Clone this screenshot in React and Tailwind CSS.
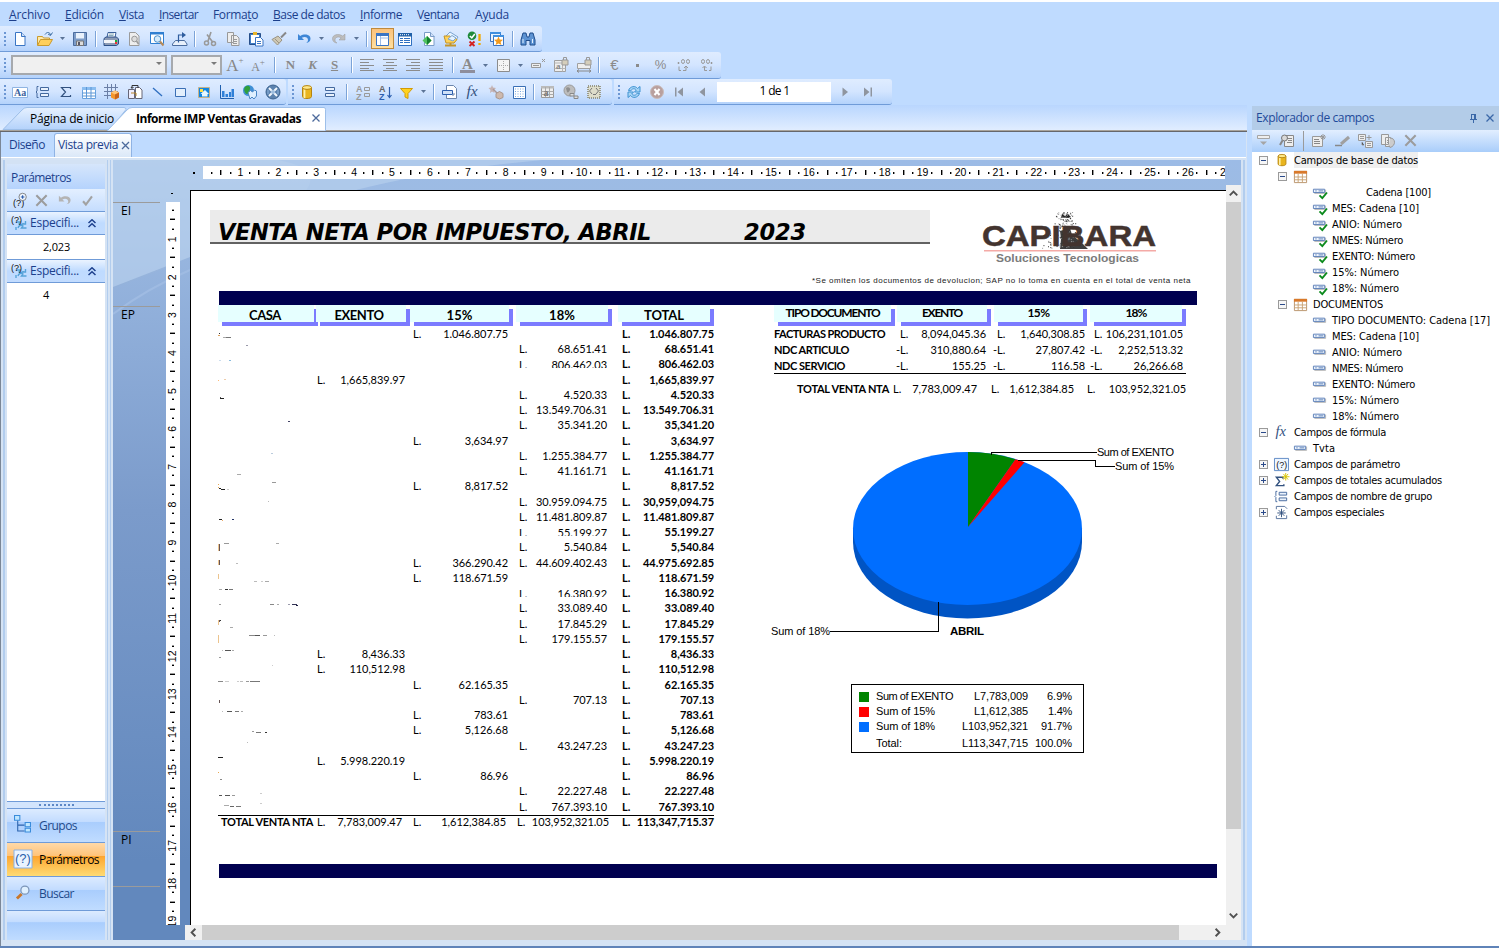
import React, { useLayoutEffect, useRef } from 'react';

const UI = "font-['Open_Sans',sans-serif]";

/* Text whose letter spacing is tuned so that it takes exactly w pixels. */
function T({ w, className = '', children }) {
  const ref = useRef(null);
  useLayoutEffect(() => {
    const el = ref.current;
    el.style.letterSpacing = '0px';
    const natural = el.getBoundingClientRect().width;
    el.style.letterSpacing = (w - natural) / el.textContent.length + 'px';
  }, [w]);
  return <span ref={ref} className={'inline-block whitespace-pre ' + className}>{children}</span>;
}

const B = '#3a75c4';
const G = '#9b9b9b';
const lines = (c, rows) => rows.map(([x, y, w], i) => <rect key={i} x={x} y={y} width={w} height="1" fill={c} />);

const ICONS = {
  doc: <><path d="M3.500 1.500h6l3.500 3.500v9.500h-9.500z" fill="#fff" stroke={B} /><path d="M9.500 1.500v4h4" fill="#cfe0f7" stroke={B} /></>,
  open: <><path d="M.5 14V5.500h5l1 1.500h6v2" fill="#ffe9a8" stroke="#c99a2e" /><path d="M.5 14.500l3-6h12l-3.500 6z" fill="#ffcf5b" stroke="#c99a2e" /><path d="M8 3.500c2-3 5-2.500 5.500.5M15.500 1.500l-2 3-2.500-1.500" fill="none" stroke="#3b6ea5" /></>,
  save: <><path d="M1.500 1.500h13v13h-13z" fill="#7d9cc8" stroke="#4b6c9e" /><path d="M4 2h8v5.500H4z" fill="#e9f1fb" /><path d="M4.500 10h7v4.500h-7z" fill="#dcdcdc" stroke="#777" /><path d="M6 11h2v3H6z" fill="#556" /></>,
  print: <><path d="M5 1.500h8l-1 5H4z" fill="#fff" stroke="#3a5f9a" /><path d="M1 7.500l2-1.500h10.500l2 2V13l-2 1.500H1z" fill="#8c9bb5" stroke="#2b4f87" /><path d="M1 9h11v3H1z" fill="#f2f4f8" /><path d="M12 9h2v2h-2z" fill="#18b13a" /><path d="M12 11h2v2h-2z" fill="#e33" /><path d="M6 3h5M5.500 4.500h5" stroke="#8ab" /></>,
  docview: <><path d="M3.500 1.500h6l3.500 3.500v9.500h-9.500z" fill="#eee" stroke={G} /><circle cx="8.500" cy="8" r="2.800" fill="#ddd" stroke="#999" /><path d="M10.500 10l2 3" stroke="#999" strokeWidth="1.500" /></>,
  preview: <><path d="M1.500 1.500h13v11h-13z" fill="#fff" stroke="#2f7fd1" /><path d="M1 1h14v2.500H1z" fill="#2f7fd1" /><circle cx="8.500" cy="8" r="3.300" fill="#d5ebfb" stroke="#4b90cc" /><path d="M11 10.500l3.500 4" stroke="#b58a5a" strokeWidth="2" /></>,
  export: <><path d="M3.500 9.500h9l2.500 3.500v1.500H.500V13z" fill="#e8f0fb" stroke="#4b6c9e" /><path d="M6.500 11.500V4h5" fill="none" stroke="#2f5d9e" strokeWidth="1.200" /><path d="M10 1l4 3-4 3z" fill="#2f5d9e" /></>,
  cut: <><path d="M9 1L6 10M5 3.500l6 8" stroke="#999" strokeWidth="1.600" /><circle cx="4.500" cy="12" r="2" fill="none" stroke="#999" strokeWidth="1.500" /><circle cx="11.500" cy="12.500" r="2" fill="none" stroke="#999" strokeWidth="1.500" /></>,
  copy: <><path d="M2.500 1.500h6v10h-6zM6.500 4.500h5l2.500 2.500v7.500H6.500z" fill="#eee" stroke="#999" /><path d="M8 8.500h4M8 10.500h4M8 12.500h4" stroke="#999" /></>,
  paste: <><path d="M1.500 2.500h11v11h-11z" fill="#3f7cc4" stroke="#274f8a" /><path d="M3 4h8v8H3z" fill="#fff" /><path d="M5 1h4v3H5z" fill="#e7b52a" /><path d="M7.500 6.500h5l2.500 2.500v6H7.500z" fill="#fff" stroke={B} /><path d="M9 10.500h4M9 12.500h4" stroke={B} /></>,
  brush: <><path d="M15 1.500l-5 5" stroke="#888" strokeWidth="2" /><path d="M7 5l4 4-4.500 5L1 8.500z" fill="#cfc8b4" stroke="#9a9484" /><path d="M4 8l4 4" stroke="#9a9484" /></>,
  undo: <path d="M2 3v6h6L5.800 6.800C9 5 12 6.500 12 9c0 1.500-.8 2.300-2 3 3-.2 4.500-2 4.500-4.500C14.500 4 9 2 4.200 5z" fill="#3d86d6" />,
  redo: <path d="M14 3v6H8l2.200-2.200C7 5 4 6.500 4 9c0 1.500.8 2.300 2 3-3-.2-4.500-2-4.500-4.500C1.500 4 7 2 11.800 5z" fill="#bdbdbd" stroke="#999" strokeWidth=".5" />,
  layout: <><path d="M2.500 2.500h12v12h-12z" fill="#fff" stroke={B} /><path d="M2 2h13v3H2z" fill={B} /><path d="M6.500 5v9M6.500 7h8" stroke="#9dbce6" /></>,
  grid2: <><path d="M1.500 2.500h13v12h-13z" fill="#fff" stroke="#2f6fc0" /><path d="M1 2h14v3.500H1z" fill="#2060a8" /><path d="M3 3.700h10" stroke="#fff" strokeDasharray="1 1" />{lines('#2f6fc0', [[3, 7, 3], [7, 7, 6], [3, 9, 3], [7, 9, 6], [3, 11, 3], [7, 11, 6]])}</>,
  docadd: <><path d="M4.500 1.500h6l3.500 3.500v9.500h-9.500z" fill="#fff" stroke="#7a9cc8" /><path d="M10.500 1.500v4h4" fill="#cfe0f7" stroke="#7a9cc8" /><path d="M7 5l4.500 4.500L7 14 2.500 9.500z" fill="#4fc25f" /><path d="M7 5l4.500 4.500L7 14z" fill="#14802f" /></>,
  dbenv: <><path d="M1 7l6-6 8 5-4 6z" fill="#e6f3ff" stroke="#7aa3cf" /><path d="M1 5h6l1 1.500h3l3 2-3 3.500H3z" fill="#ffd257" stroke="#c4952a" /><path d="M5 8l4-3.500 4 2.500-3 3z" fill="#e6f3ff" stroke="#7aa3cf" /><path d="M2 14.500h11M7.500 12v3" stroke="#c4952a" strokeWidth="2" /></>,
  check: <><circle cx="6" cy="4.800" r="4.300" fill="#1f8a3a" /><path d="M3.800 5l2 1.800L8.800 3" stroke="#fff" strokeWidth="1.500" fill="none" /><path d="M3.500 10.500l5 4.500M8.500 10.500l-5 4.500" stroke="#d3201f" strokeWidth="1.900" /><path d="M13.500 3v7M13.500 12v2" stroke="#f0a800" strokeWidth="2.300" /></>,
  star: <><path d="M1.500 1.500h10v9h-10z" fill="#e9f3ff" stroke={B} /><path d="M4.500 4.500h10v10h-10z" fill="#fff" stroke={B} /><path d="M1 1h11v2H1zM4 4h11v2H4z" fill="#3f8fe0" /><path d="M9.500 5.500l1.300 3 3.200.3-2.400 2.100.8 3.100-2.900-1.600L6.600 14l.8-3.100L5 8.800l3.200-.3z" fill="#f39a1d" /></>,
  find: <><path d="M3 2h3l1 4h2l1-4h3l2 7v5h-5V9.500H6V14H1V9z" fill="#5d93d3" stroke="#1f4c8b" /><path d="M3 8v4M12.500 8v4" stroke="#e3f0ff" /></>,
  al: <path d="M1 2.500h14M1 5.500h9M1 8.500h14M1 11.500h9M1 13.500h14" stroke="#8c8c8c" />,
  ac: <path d="M1 2.500h14M4 5.500h8M1 8.500h14M4 11.500h8M1 13.500h14" stroke="#8c8c8c" />,
  ar: <path d="M1 2.500h14M6 5.500h9M1 8.500h14M6 11.500h9M1 13.500h14" stroke="#8c8c8c" />,
  aj: <path d="M1 2.500h14M1 5.500h14M1 8.500h14M1 11.500h14M1 13.500h14" stroke="#8c8c8c" />,
  border: <><path d="M2.500 2.500h12v12h-12z" fill="#f4f4f4" stroke="#8c8c8c" /><path d="M8.500 4v9M4 8.500h9" stroke="#aaa" strokeDasharray="1 1" /></>,
  suppress: <><path d="M1.500 6.500h9v4h-9z" fill="#eee" stroke="#999" /><path d="M3 8.500h6" stroke="#999" /><path d="M12 2l3 3M15 2l-3 3" stroke="#999" /></>,
  lockgrid: <><path d="M1.500 3.500h11v11h-11z" fill="#eee" stroke="#a0a0a0" /><path d="M1.500 6h11M1.500 11.500h11M9.500 3.500v11" stroke="#b5b5b5" /><text x="3" y="12" fontSize="9" fontWeight="bold" fill="#888" fontFamily="Liberation Serif">a</text><path d="M9 3h6v5H9z" fill="#d5cebb" stroke="#999" /><path d="M10.500 3V.500h3V3" fill="none" stroke="#999" /></>,
  locksize: <><path d="M1.500 6.500h13v5h-13z" fill="#eee" stroke="#a0a0a0" /><path d="M9 3h6v5H9z" fill="#d5cebb" stroke="#999" /><path d="M10.500 3V.500h3V3" fill="none" stroke="#999" /><path d="M1 14h14M3 12.500L1 14l2 1.500M13 12.500l2 1.500-2 1.500" fill="none" stroke="#888" /></>,
  decAdd: <><path d="M5.500 4.500a1.500 2 0 1 0 3 0a1.500 2 0 1 0-3 0M10.500 4.500a1.500 2 0 1 0 3 0a1.500 2 0 1 0-3 0" fill="none" stroke="#999" /><path d="M2 5.500h1v1H2zM3 9.500v4h2M7 13.500h3v-4M8 11l2-2 2 2" fill="none" stroke="#999" /></>,
  decDel: <><path d="M2.500 4.500a1.500 2 0 1 0 3 0a1.500 2 0 1 0-3 0M7.500 4.500a1.500 2 0 1 0 3 0a1.500 2 0 1 0-3 0" fill="none" stroke="#999" /><path d="M12 5.500h1v1h-1zM12 9.500v4h-2M8 13.500H5.500v-4M3.500 11l2-2 2 2" fill="none" stroke="#999" /></>,
  textobj: <><path d="M.5 3.500h15v10H.5z" fill="#fff" stroke="#8fb4e2" /><text x="2" y="12" fontSize="10" fontWeight="bold" fill="#3c64a0" fontFamily="Liberation Serif">Aa</text></>,
  group: <><path d="M3.500 2.500H2v4.500L1 8l1 1v4.500h1.500" fill="none" stroke="#44699e" /><path d="M5.500 3.500h8v3h-8zM5.500 9.500h8v3h-8z" fill="#eaf2fc" stroke="#44699e" /></>,
  sum: <path d="M12.500 5V3.500h-9L7.500 8l-4 4.500h9V11" fill="none" stroke="#33527f" strokeWidth="1.200" />,
  crosstab: <><path d="M1.500 3.500h13v11h-13z" fill="#fff" stroke="#6aa3de" /><path d="M1 3h14v3H1z" fill="#8abdf0" /><path d="M1.500 9h13M1.500 12h13M5.500 3v11M10 3v11" stroke="#5c97d6" /></>,
  cube: <><path d="M0 3.500h14M0 7.500h14M0 11.500h8M3.500 0v15M7.500 0v10M11.500 0v7" stroke="#6b7fa6" /><path d="M7 8.500l4-2 4 2v5l-4 2-4-2z" fill="#f5962a" /><path d="M7 8.500l4 2 4-2-4-2z" fill="#ffc57a" /><path d="M11 10.500l4-2v5l-4 2z" fill="#c9661a" /></>,
  subrep: <><path d="M1.500 5.500h6v9h-6z" fill="#eef" stroke="#667" /><path d="M8.500 3.500h4l2.500 2.500v8.500H8.500z" fill="#fff" stroke="#667" /><path d="M5 4V1.500h6V4M4 3l1 1.500L6.500 3" fill="none" stroke="#333" /><path d="M4 9h5v3" fill="none" stroke="#b8862c" /></>,
  line: <path d="M3 4l9 8" stroke="#2f6fc0" strokeWidth="1.300" />,
  box: <path d="M2.500 4.500h10v8h-10z" fill="#e3effc" stroke="#3a6fb5" />,
  picture: <><path d="M2.500 3.500h11v10h-11z" fill="#1286e0" stroke="#c4b28a" /><path d="M6 12.500V10H4.500L9 6l4 4h-1.500v2.500z" fill="#e6f8ff" /><path d="M4 5h3v3H4z" fill="#ffe14a" /></>,
  chart: <><path d="M1.500 1v13.500H15" fill="none" stroke="#1f5fae" /><path d="M3 7h2.500v6H3zM6.500 10H9v3H6.500zM10 8h2v5h-2zM12.500 5H15v8h-2.500z" fill="#2f80d8" /></>,
  map: <><circle cx="6.500" cy="6.500" r="5.500" fill="#3f8fd6" /><path d="M3 3c3-3 6 0 5 2s-1 5-3 5-4-5-2-7z" fill="#2fa03c" /><path d="M6 8.500l2.500-2 2 1.500 2-2 2 1v5l-2.500 3-2-2-2 2z" fill="#dff0ff" stroke="#4a86c4" /></>,
  flash: <><circle cx="8" cy="8" r="7" fill="#5b82ae" stroke="#3c638f" /><path d="M4 4l8 8M12 4l-8 8" stroke="#f2f7fc" strokeWidth="2" /><circle cx="8" cy="8" r="2" fill="#9fbfe0" /><path d="M3 6v4M13 6v4" stroke="#8db2dc" /></>,
  db: <><path d="M3.500 3.500v9c0 2.700 9 2.700 9 0v-9" fill="#e9b51e" stroke="#b58410" /><path d="M5.500 5v9" stroke="#fff1a8" strokeWidth="1.800" /><ellipse cx="8" cy="3.500" rx="4.500" ry="1.900" fill="#ffe98a" stroke="#b58410" /></>,
  section: <path d="M3.500 3.500h9v3h-9zM3.500 9.500h9v3h-9z" fill="#eaf2fc" stroke="#44699e" />,
  sortg: <><text x="1" y="7.500" fontSize="9" fontWeight="bold" fill="#999" fontFamily="Liberation Sans">A</text><text x="1" y="15.500" fontSize="9" fontWeight="bold" fill="#999" fontFamily="Liberation Sans">Z</text><path d="M9.500 3.500h5v3h-5zM9.500 9.500h5v3h-5z" fill="none" stroke="#999" /></>,
  sort: <><text x="1" y="7.500" fontSize="9" fontWeight="bold" fill="#666" fontFamily="Liberation Sans">A</text><text x="1" y="15.500" fontSize="9" fontWeight="bold" fill="#2d5fae" fontFamily="Liberation Sans">Z</text><path d="M11.500 3v10M9.500 11l2 2.500 2-2.500" fill="none" stroke="#2d5fae" strokeWidth="1.200" /></>,
  filter: <path d="M1.500 4.500h12L9 9.500v5L6 13V9.500z" fill="#ffd21f" stroke="#d39b06" />,
  insfield: <><path d="M4.500 1.500h7l3 3v10h-10z" fill="#fff" stroke="#6b86ad" /><path d="M.5 6.500h10v4H.5z" fill="#cfe1f8" stroke="#2d5fae" /><path d="M12 9v2h-2" fill="none" stroke="#6b86ad" /></>,
  fx: <text x="1.500" y="12" fontSize="15.500" fontStyle="italic" fill="#33527f" fontFamily="Liberation Serif">fx</text>,
  hammer: <><path d="M4 1l1 2.500 3 .5-2 2 .5 3L4 7.500 2 9l.5-3L.500 4l2.500-.5z" fill="#c5b3b3" /><path d="M5 5l5 5" stroke="#a99" strokeWidth="1.500" /><path d="M8 9.500l3.500-2 3.500 2v4L11.500 15 8 13.500z" fill="#cdb9ae" stroke="#a9968c" /></>,
  dotgrid: <><path d="M2.500 2.500h12v12h-12z" fill="#fff" stroke="#3a6fb5" /><path d="M4 5h9M4 7.500h9M4 10h9M4 12.500h9" stroke="#7ba7df" strokeDasharray="1 1.500" /></>,
  gridg: <><path d="M1.500 2.500h12v11h-12z" fill="#eee" stroke="#999" /><path d="M1 2h13v2.500H1z" fill="#bbb" /><path d="M1.500 7.500h12M1.500 10.500h12M5.500 3v10M9.500 3v10" stroke="#aaa" /><text x="3.500" y="12" fontSize="10" fontWeight="bold" fill="#777" fontFamily="Liberation Serif">a</text></>,
  globeg: <><circle cx="6.500" cy="6.500" r="5.500" fill="#bdbdbd" stroke="#999" /><path d="M3 4c2-2 5 0 4 2s-2 3-3 2z" fill="#8f8f8f" /><path d="M7 9.500h4v2.500H7zM11 12h4v2.500h-4z" fill="#ddd" stroke="#888" /></>,
  code: <><path d="M2 2h12v12H2z" fill="#deddca" stroke="#9a9a88" strokeDasharray="1 1" strokeWidth="2" /><path d="M6 4L3.500 7 6 10M10 4l2.500 3L10 10M7 10.500h3" fill="none" stroke="#777" /></>,
  refresh: <><path d="M2.500 6.500c1.500-4.500 7-5 9-2L14 2.500V8H8.500l1.800-2C8.500 4 6 4.500 4.800 6.800z" fill="#a8d5f5" stroke="#3f93d2" /><path d="M13.500 9.500c-1.500 4.500-7 5-9 2L2 13.500V8h5.500l-1.800 2c1.800 2 4.300 1.500 5.500-.8z" fill="#a8d5f5" stroke="#3f93d2" /></>,
  stop: <><circle cx="8" cy="8" r="6.500" fill="#b9a09e" stroke="#c9bcbb" /><path d="M5.500 5l5 6M10.500 5l-5 6" stroke="#fff" strokeWidth="2" /></>,
  first: <path d="M4 3.500v9h1.500v-9zM12 3.500v9L6.500 8z" fill="#8f959f" />,
  prev: <path d="M11 3.500v9L5.500 8z" fill="#8f959f" />,
  next: <path d="M5.500 3.500v9L11 8z" fill="#8f959f" />,
  last: <path d="M4 3.500v9L9.500 8zM10.500 3.500v9H12v-9z" fill="#8f959f" />,
  x: <path d="M2.500 2.500l11 11M13.500 2.500l-11 11" stroke="#9c9c9c" strokeWidth="2.200" />,
  undog: <path d="M2 3v6h6L5.800 6.800C9 5 12 6.500 12 9c0 1.500-.8 2.300-2 3 3-.2 4.500-2 4.500-4.500C14.500 4 9 2 4.200 5z" fill="#b4b4b4" />,
  tick: <path d="M2.500 9l3.500 4L13.500 3" stroke="#a2a2a2" strokeWidth="2.600" fill="none" />,
  param: <><text x="0" y="14.500" fontSize="10.500" fill="#111" fontFamily="Liberation Sans">(?)</text><circle cx="11" cy="4.500" r="4.200" fill="#eef6ff" stroke="#777" /><path d="M9 4.500h4M11 2.500v4" stroke="#2456a8" strokeWidth="1.200" /></>,
  paramrot: <><path d="M5 7h4l-1 2c2 1.500 4 .5 4.500-1M15.500 13h-5l1.500-2c-2-1.500-4.500-.5-5 2M14.500 6v3h-4M5 15v-3" fill="none" stroke="#56a3d9" strokeWidth="1.400" /><text x="0" y="8" fontSize="9" fill="#111" fontFamily="Liberation Sans">(?)</text></>,
  fieldg: <><path d="M1.500 2.500h12v3h-12z" fill="#eee" stroke="#a5a5a5" /><path d="M4 8.500h7L7.500 12z" fill="#a5a5a5" /></>,
  browse: <><path d="M5.500 2.500h9v11h-9z" fill="#eee" stroke="#888" /><path d="M8 5.500h5M9 7.500h4M8 9.500h5" stroke="#888" /><circle cx="5.500" cy="5" r="3" fill="#d9d9d9" stroke="#777" /><path d="M3.500 7.500L1 12" stroke="#888" strokeWidth="2" /></>,
  newg: <><path d="M1.500 3.500h10v10h-10z" fill="#eee" stroke="#999" /><path d="M3 6.500h5M3 8.500h6M3 10.500h6" stroke="#888" /><path d="M12 1v6M9 4h6M10 2l4 4M14 2l-4 4" stroke="#999" /></>,
  editg: <><path d="M1 12.500h7" stroke="#888" strokeWidth="1.500" /><path d="M7 11l8-7" stroke="#a0a0a0" strokeWidth="3" /></>,
  copyg: <><path d="M1.500 1.500h7v6h-7zM8.500 8.500h7v6h-7z" fill="#eee" stroke="#999" /><path d="M3 3.500h4M3 5.500h4M10 10.500h4M10 12.500h4M5 9v3h2M12 2v5M9.500 4.500h5" stroke="#999" /></>,
  verg: <><path d="M1.500 1.500h7v10h-7zM5.500 4.500h5v9h-5z" fill="#eee" stroke="#999" /><path d="M10 5c6 0 6 8 0 9.500l-1-2" fill="#ccc" stroke="#999" /><path d="M7 7.500h2M7 9.500h2" stroke="#999" /></>,
  table: <><path d="M1.500 2.500h13v12h-13z" fill="#fff" stroke="#b9926a" /><path d="M1 2h14v3H1z" fill="#d9792a" /><path d="M1.500 8.500h13M1.500 11.500h13M5.500 5v9M10 5v9" stroke="#c9a273" /></>,
  field: <><path d="M2.500 10h12V6" fill="none" stroke="#b5b5b5" /><path d="M1.500 5.500h12v3.500h-12z" fill="#eef4fc" stroke="#5c7fb8" /><path d="M3.500 7.300h1.500M7 7.300h5" stroke="#5c7fb8" /></>,
  fieldok: <><path d="M2.500 9h12V5" fill="none" stroke="#b5b5b5" /><path d="M1.500 4.500h12V8h-12z" fill="#eef4fc" stroke="#5c7fb8" /><path d="M3.500 6.300h1.500M7 6.300h5" stroke="#5c7fb8" /><path d="M8 11l3 3 5-6" stroke="#0b8a1c" strokeWidth="2" fill="none" /></>,
  parambox: <><path d="M.5 1.500h15v13H.5z" fill="#eef6ff" stroke="#5c87c4" /><text x="2.500" y="11.500" fontSize="9.500" fill="#111" fontFamily="Liberation Sans">(?)</text></>,
  sumstar: <><path d="M9.500 6V4.500h-7L6 9l-3.500 4.500h8V12" fill="none" stroke="#33527f" strokeWidth="1.500" /><path d="M12.500 0v8M8.500 4h8M10 1l5 6M15 1l-5 6" stroke="#d8c400" /></>,
  special: <><path d="M2.500 1.500h9l2.500 2.500M13.500 11v3.500h-11v-3M2.500 1.500v3" fill="none" stroke="#55719c" /><path d="M8 4v9M3.500 8.500h9M5 5.500l6 6M11 5.500l-6 6" stroke="#33527f" /></>,
  tree: <><path d="M3.500 5v10H10M3.500 9.500H10" fill="none" stroke="#2a62ad" /><path d="M.500.500h5v4.500h-5zM10.500 7h5v4h-5zM10.500 12.500h5v3.500h-5z" fill="#bfe6ff" stroke="#3a8cdb" /></>,
  pq: <><path d="M-1-1h18v18H-1z" fill="#eaf4ff" stroke="#8ab2e6" /><text x="0" y="12" fontSize="13" fill="#2a62ad" fontFamily="Liberation Sans">(?)</text></>,
  search: <><path d="M1 14.500L6 9.500" stroke="#c9772b" strokeWidth="3" /><circle cx="9.500" cy="5.500" r="4.300" fill="#dff0ff" stroke="#7b95b8" strokeWidth="1.300" /></>,
};

const Icon = ({ n, s = 'size-4' }) => <svg viewBox="0 0 16 16" className={s + ' shrink-0 overflow-visible'}>{ICONS[n]}</svg>;

const SERIF = "font-['Liberation_Serif',serif] ";
const LETTERS = {
  'A+': <span className={SERIF + 'text-[17px] text-[#858585] leading-none'}>A<sup className="text-[9px] -top-2">+</sup></span>,
  'a+': <span className={SERIF + 'text-[12px] text-[#858585] leading-none pt-1'}>A<sup className="text-[9px] -top-1.5">+</sup></span>,
  N: <span className={SERIF + 'text-[13px] font-bold text-[#8a8a8a]'}>N</span>,
  K: <span className={SERIF + 'text-[13px] font-bold italic text-[#8a8a8a]'}>K</span>,
  S: <span className={SERIF + 'text-[13px] font-bold text-[#8a8a8a] underline'}>S</span>,
  A: <span className={SERIF + 'text-[15px] font-bold leading-[12px] text-[#8a8a8a] border-b-[3px] border-[#8e8e9c] px-[2px]'}>A</span>,
  '€': <span className="font-['Liberation_Sans',sans-serif] text-[15px] text-[#8b8b8b]">€</span>,
  '.': <span className="size-[3px] bg-[#8b8b8b]" />,
  '%': <span className="font-['Liberation_Sans',sans-serif] text-[13px] text-[#8b8b8b]">%</span>,
};

function Tool({ t }) {
  if (t === '|') return <span className="flex w-[7.500px] shrink-0 justify-center"><i className="h-4 w-px bg-[#7ba3d8] shadow-[1px_0_0_#fff]" /></span>;
  if (t === 'v') return <span className="flex w-[12.500px] shrink-0 justify-center"><svg viewBox="0 0 5 3" className="h-[3px] w-[5px]"><path d="M0 0h5L2.500 3z" fill="#5b7396" /></svg></span>;
  if (t === '~') return <span className="w-[1.500px] shrink-0" />;
  if (t === 'on:layout') return <span className="flex h-[21px] w-[23px] shrink-0 items-center justify-center border border-[#c08a3c] bg-gradient-to-b from-[#fbc27c] to-[#ffe0a0]"><Icon n="layout" /></span>;
  return <span className="flex w-[23px] shrink-0 items-center justify-center">{LETTERS[t] || <Icon n={t} />}</span>;
}

const Grip = () => (
  <span className="flex w-[8.500px] shrink-0 flex-col items-center gap-[2px] pl-px">
    <i className="size-[2px] bg-[#6b96d3]" /><i className="size-[2px] bg-[#6b96d3]" /><i className="size-[2px] bg-[#6b96d3]" /><i className="size-[2px] bg-[#6b96d3]" />
  </span>
);

const Bar = ({ className, children }) => (
  <div className={'flex shrink-0 items-center rounded-r-[3px] border-b border-[#6f9bd8] bg-gradient-to-b from-[#dfecff] via-[#d3e5ff] to-[#b4d2fb] ' + className}>{children}</div>
);
const tools = (s) => s.split(' ').map((t, i) => <Tool key={i} t={t} />);

const MENU = [['', 'A', 'rchivo', 41, 'mr-[15px]'], ['', 'E', 'dición', 39, 'mr-[15px]'], ['', 'V', 'ista', 25, 'mr-[15px]'], ['', 'I', 'nsertar', 39, 'mr-[15px]'], ['Forma', 't', 'o', 45, 'mr-[15px]'], ['', 'B', 'ase de datos', 72, 'mr-[15px]'], ['', 'I', 'nforme', 42, 'mr-[15px]'], ['V', 'e', 'ntana', 42, 'mr-[16px]'], ['A', 'y', 'uda', 34, '']];

const Combo = ({ className }) => (
  <div className={'flex h-[20px] shrink-0 items-start justify-end border-2 border-[#a6a9ad] bg-[#f0f0f0] p-[5px] pr-[3px] ' + className}>
    <svg viewBox="0 0 6 3" className="h-[3px] w-[6px]"><path d="M0 0h6L3 3z" fill="#7a7a7a" /></svg>
  </div>
);

function Toolbars() {
  return (
    <>
      <div className="h-[2px] bg-white" />
      <nav className="flex h-6 items-center pl-[9px] pt-px text-[12px] text-[#1c3f8c]">
        {MENU.map(([a, u, b, w, m], i) => <T key={i} w={w} className={m}>{a}<u>{u}</u>{b}</T>)}
      </nav>
      <Bar className="h-[26px] w-[542px]"><Grip />{tools('doc ~ open v save | print docview preview export | cut copy paste brush ~ undo v redo v | on:layout grid2 docadd dbenv check star | find')}</Bar>
      <Bar className="h-[27px] w-[721px]">
        <Grip /><span className="w-[2.500px] shrink-0" /><Combo className="w-[156px]" /><span className="w-[4px] shrink-0" /><Combo className="w-[51px]" />
        {tools('~ A+ a+ ~ |')}<span className="-ml-px w-0" />{tools('~ N')}<span className="-ml-px w-0" />{tools('K')}<span className="-ml-px w-0" />{tools('S ~ | al ac ar aj ~ |')}{tools('A v border v')}<span className="-ml-px w-0" />{tools('suppress lockgrid locksize |')}<span className="-ml-px w-0" />{tools('~ € . % decAdd decDel')}
      </Bar>
      <div className="flex h-[26px] gap-[2.500px]">
        <Bar className="h-full w-[285.500px]"><Grip />{tools('textobj group sum crosstab cube subrep line box picture chart map flash')}</Bar>
        <Bar className="h-full w-[323.500px]"><Grip /><span className="-ml-px w-0" />{tools('db section ~ |')}<span className="-ml-px w-0" />{tools('~ sortg sort ~')}<span className="-ml-[3px] w-0" />{tools('filter')}<span className="-ml-px w-0" />{tools('v |')}<span className="-ml-px w-0" />{tools('~ insfield fx hammer dotgrid |')}<span className="-ml-px w-0" />{tools('gridg globeg code')}</Bar>
        <Bar className="h-full w-[278px]"><Grip />{tools('refresh stop')}<span className="-ml-px w-0" />{tools('first prev')}
          <span className="ml-[3px] mr-[3px] flex h-[20px] w-[114px] items-start justify-center bg-white pl-[2px] text-[12px] leading-[17px] text-black"><T w={30}>1 de 1</T></span>
          {tools('next last')}
        </Bar>
      </div>
    </>
  );
}

function Tabs() {
  return (
    <div className="flex h-[27px] border-b border-[#66676b] bg-gradient-to-b from-[#b9d6fe] to-[#e2eeff] text-[12px] text-black shadow-[inset_0_-1px_0_#a9a49c]">
      <div className="relative h-full w-[326px]">
        <svg className="absolute left-0 top-0" width="330" height="26">
          <defs><linearGradient id="tab" x2="0" y2="1"><stop offset="0" stopColor="#e6f1ff" /><stop offset="1" stopColor="#b4d2fb" /></linearGradient></defs>
          <path d="M3 24.500L22 5q2-2.500 5-2.500h97q2 0 2 2L110 24.500z" fill="url(#tab)" stroke="#9dbfe9" />
          <path d="M107 26L127 5q2-2.500 5-2.500h192q1.500 0 1.500 2V26z" fill="#fff" stroke="#9dbfe9" />
          <path d="M312.500 9.500l7 7M319.500 9.500l-7 7" stroke="#4d6a9c" strokeWidth="1.300" />
        </svg>
        <div className="relative flex h-full items-center pl-[30px] pt-[2px]">
          <T w={84}>Página de inicio</T>
          <T w={165} className="ml-[22px] font-bold">Informe IMP Ventas Gravadas</T>
        </div>
      </div>
    </div>
  );
}

const ParamHead = () => (
  <div className="flex h-[24px] items-center border-y border-[#6f9bd8] bg-gradient-to-b from-[#eaf3ff] via-[#bfdbff] to-[#c2dcff] pl-[4px] text-[12px] text-[#1c3f8c]">
    <Icon n="paramrot" /><T w={49} className="ml-[3px]">Especifi...</T>
    <svg viewBox="0 0 8 9" className="ml-[9px] h-[9px] w-2"><path d="M.5 4L4 .8 7.500 4M.5 8L4 4.800 7.500 8" fill="none" stroke="#1c3f8c" strokeWidth="1.500" /></svg>
  </div>
);

const NAVB = 'flex h-[34px] items-center border-b border-[#6f9bd8] ';
const BLUE = 'bg-[linear-gradient(#dcebff,#c3dcff_38%,#a9cdfd_40%,#c0dcff)] ';
function Sidebar() {
  return (
    <aside className="flex h-full w-[98px] shrink-0 flex-col text-[12px]">
      <div className="h-[4px] bg-[#d3e2f4]" />
      <div className="flex h-[25px] items-center bg-gradient-to-b from-[#d6e6fb] to-[#b5d3fd] pl-[4px] pt-[2px] text-[#1c3f8c]"><T w={60}>Parámetros</T></div>
      <div className="flex h-[22px] items-center bg-gradient-to-b from-[#e3efff] to-[#c5ddfe] pl-[6px]">
        <Icon n="param" s="size-[14px]" /><Icon n="x" s="size-[15px] ml-[7px]" /><Icon n="undog" s="size-[15px] ml-[8px]" /><Icon n="tick" s="size-[13px] ml-[9px]" />
      </div>
      <ParamHead />
      <div className="flex h-[24px] items-center bg-white pl-[36px] text-[11px] text-black"><T w={27}>2,023</T></div>
      <ParamHead />
      <div className="flex-1 bg-white pl-[36px] pt-[4px] text-[11px] text-black">4</div>
      <div className="flex h-[8px] items-center justify-center border-y border-[#6f9bd8] bg-[#d3e5fd]"><i className="h-[2px] w-[35px] border-t-2 border-dotted border-[#5d88c6]" /></div>
      <div className={NAVB + BLUE + 'pl-[7px] text-[#1f4a8a]'}><Icon n="tree" s="size-[17px] -mt-1" /><T w={38} className="ml-[8px]">Grupos</T></div>
      <div className={NAVB + 'bg-[linear-gradient(#ffd9a8,#ffc47a_38%,#fda52f_40%,#ffdb73)] pl-[8px] text-black'}><Icon n="pq" s="size-[16px] -mt-px" /><T w={60} className="ml-[8px]">Parámetros</T></div>
      <div className={NAVB + BLUE + 'pl-[9px] text-[#1f4a8a]'}><Icon n="search" s="size-[15px] -mt-0.5" /><T w={35} className="ml-[8px]">Buscar</T></div>
      <div className={BLUE + 'h-[29px]'} />
    </aside>
  );
}

const U = 37.9;
function Ruler({ vertical }) {
  const max = vertical ? 19 : 27;
  const len = vertical ? 723 : 1022;
  const mark = (k, c, long) => <rect key={k} x={vertical ? -Math.round(c) : Math.round(c) - 1} y={long ? 4 : 6} width="1.400" height={long ? 5 : 2} />;
  const marks = Array.from({ length: max }, (_, i) => [
    mark('a' + i, i * U + U * 0.25 - 0.5), mark('b' + i, i * U + U * 0.5 - 0.5, true), mark('c' + i, i * U + U * 0.75 - 0.5),
  ]);
  const nums = Array.from({ length: max }, (_, i) => (
    <text key={i} x={((i + 1) * U - 0.5) * (vertical ? -1 : 1)} y={vertical ? 10 : 9.800} textAnchor="middle" fontSize="10.500" fontFamily="Liberation Sans">{i + 1}</text>
  ));
  if (vertical) return <svg width="14" height={len} className="block bg-white"><g transform="rotate(-90)">{marks}{nums}</g></svg>;
  return <svg width={len} height="13" className="block bg-white">{marks}{nums}</svg>;
}

/* column: e = exento, q = 15%, d = 18% */
const ROWS = [
  ['q', '1.046.807.75'], ['d', '68.651.41'], ['d', '806.462.03', 1], ['e', '1,665,839.97'], ['d', '4.520.33'], ['d', '13.549.706.31'],
  ['d', '35.341.20', 0, '35,341.20'], ['q', '3,634.97'], ['d', '1.255.384.77'], ['d', '41.161.71'], ['q', '8,817.52'],
  ['d', '30.959.094.75', 0, '30,959,094.75'], ['d', '11.481.809.87'], ['d', '55.199.27', 1], ['d', '5.540.84', 0, '5,540.84'],
  ['qd', '366.290.42', 0, '44.975.692.85', '44.609.402.43'], ['q', '118.671.59'], ['d', '16.380.92', 1], ['d', '33.089.40'], ['d', '17.845.29'],
  ['d', '179.155.57'], ['e', '8,436.33'], ['e', '110,512.98'], ['q', '62.165.35'], ['d', '707.13'], ['q', '783.61'], ['q', '5,126.68'],
  ['d', '43.247.23'], ['e', '5.998.220.19'], ['q', '86.96'], ['d', '22.227.48'], ['d', '767.393.10'],
];
const nw = (s) => [...s].reduce((a, c) => a + (/\d/.test(c) ? 6.17 : 3.1), 0);
const Money = ({ v, cls = '', cut }) => (
  <div className={'flex justify-between whitespace-nowrap ' + (cut ? 'h-[12px] overflow-hidden leading-[17px] ' : '') + cls}>{v && <><span>L.</span><T w={nw(v)}>{v}</T></>}</div>
);
const COLS = 'grid grid-cols-[99px_88px_8px_95px_11px_88px_15px_92px]';

const Head = ({ children, cls, w }) => (
  <div className={'relative flex h-[17px] justify-center bg-[#e6ffff] text-[13px] font-bold leading-[20px] ' + cls}>
    <T w={w}>{children}</T>
    <i className="absolute -bottom-1 -right-1 left-1 h-1 bg-[#7b7bff]" />
    <i className="absolute -bottom-1 -right-1 top-[4px] w-1 bg-[#7b7bff]" />
  </div>
);

const BITS = [[218, 335, 2, '#d9a060'], [219, 333, 1, '#333'], [223, 337, 3, '#aaa'], [226, 337, 5, '#777'], [246, 345, 2, '#99a'], [219, 360, 2, '#cde'], [229, 360, 2, '#8bd'], [218, 380, 1, '#fb7'], [224, 379, 2, '#eca'], [220, 398, 4, '#222'], [220, 397, 1, '#555'], [288, 421, 2, '#446'], [271, 453, 2, '#bcd'], [237, 474, 4, '#aaa'], [272, 482, 4, '#999'], [218, 484, 1, '#e9a850'], [218, 487, 1, '#e9a850'], [219, 488, 2, '#222'], [221, 489, 4, '#222'], [227, 489, 2, '#ccc'], [268, 501, 1, '#bbb'], [219, 519, 3, '#222'], [222, 520, 1, '#ea6'], [232, 519, 2, '#236'], [224, 543, 5, '#999'], [276, 543, 3, '#aaa'], [236, 563, 2, '#bbb'], [254, 581, 3, '#bbb'], [261, 581, 2, '#ccc'], [265, 581, 4, '#aaa'], [219, 589, 3, '#aaa'], [225, 589, 3, '#333'], [229, 589, 4, '#777'], [219, 604, 2, '#999'], [270, 604, 4, '#888'], [277, 604, 2, '#aaa'], [288, 604, 2, '#99a'], [292, 604, 5, '#335'], [296, 605, 2, '#224'], [219, 620, 2, '#333'], [230, 627, 3, '#aaa'], [249, 635, 6, '#888'], [255, 635, 5, '#555'], [263, 635, 4, '#999'], [274, 635, 1, '#bbb'], [222, 650, 1, '#bbb'], [225, 650, 6, '#555'], [232, 650, 2, '#aaa'], [219, 657, 2, '#999'], [272, 665, 1, '#ccc'], [218, 681, 5, '#888'], [225, 681, 4, '#ccc'], [237, 681, 2, '#ccc'], [240, 681, 3, '#bbb'], [246, 681, 3, '#999'], [250, 681, 10, '#777'], [222, 711, 1, '#bbb'], [227, 711, 5, '#555'], [235, 711, 4, '#777'], [241, 711, 2, '#aaa'], [252, 731, 2, '#999'], [256, 732, 5, '#777'], [265, 732, 2, '#333'], [247, 742, 1, '#bbb'], [218, 757, 5, '#222'], [218, 772, 1, '#e9a850'], [220, 779, 2, '#888'], [219, 795, 3, '#555'], [225, 795, 5, '#555'], [232, 795, 3, '#999'], [260, 793, 2, '#ccc'], [224, 805, 5, '#aaa'], [230, 806, 4, '#666'], [236, 806, 5, '#777'], [260, 803, 2, '#ccc']];

function Casa() {
  return (
    <svg className="absolute left-0 top-[20px]" width="110" height="495" viewBox="218 325 110 495" shapeRendering="crispEdges">
      {BITS.map(([x, y, w, c], i) => <rect key={i} x={x} y={y} width={w} height="1" fill={c} />)}
      <path d="M218.500 544v7M218.500 560v5M218.500 574v5M218.500 620v5M218.500 635v8" stroke="#ecc48e" />
      <path d="M219.500 544v7M219.500 560v5M219.500 620v2M219.500 700v3" stroke="#655" />
    </svg>
  );
}

function MainTable() {
  return (
    <div className="relative w-[496px] shrink-0">
      <div className="flex h-[21px]">
        <Head cls="w-[96px] mr-[2px] pr-[2px]" w={32}>CASA</Head>
        <Head cls="w-[90px] mr-[4px] pr-[4px]" w={49}>EXENTO</Head>
        <Head cls="w-[99px] mr-[7px]" w={26}>15%</Head>
        <Head cls="w-[92px] mr-[10px]" w={26}>18%</Head>
        <Head cls="w-[92px]" w={40}>TOTAL</Head>
      </div>
      <Casa />
      <div className="-mt-[.100px] pb-[.600px] text-[11px]">
        {ROWS.map(([c, v, cut, tot, v2], i) => (
          <div key={i} className={COLS + ' h-[15.260px] leading-[16px]'}>
            <i /><Money v={c === 'e' && v} /><i /><Money v={c[0] === 'q' && v} /><i />
            <Money v={c === 'd' ? v : v2} cut={cut} /><i /><Money v={tot || v} cls="font-bold" />
          </div>
        ))}
      </div>
      <div className={COLS + ' border-t border-black text-[11px] leading-[12px]'}>
        <b className="whitespace-nowrap pl-[3px]"><T w={92}>TOTAL VENTA NTA</T></b>
        <Money v="7,783,009.47" cls="pr-[3px]" /><i /><Money v="1,612,384.85" cls="pr-[2px]" /><i /><Money v="103,952,321.05" cls="-ml-[2px] -mr-[2px]" /><i /><Money v="113,347,715.37" cls="font-bold" />
      </div>
    </div>
  );
}

const DOCS = [
  ['FACTURAS PRODUCTO', 111, 'L.', '8,094,045.36', '1,640,308.85', '106,231,101.05'],
  ['NDC ARTICULO', 75, '-L.', '310,880.64', '27,807.42', '2,252,513.32'],
  ['NDC SERVICIO', 71, '-L.', '155.25', '116.58', '26,266.68'],
];

function DocTable() {
  return (
    <div className="w-[412px] text-[11px]">
      <div className="flex h-[21px] leading-none">
        <Head cls="w-[117px] mr-[6px] !leading-[16px] !text-[12px]" w={94}>TIPO DOCUMENTO</Head>
        <Head cls="w-[90px] mr-[7px] !leading-[16px] !text-[12px]" w={40}>EXENTO</Head>
        <Head cls="w-[89px] mr-[7px] !leading-[16px] !text-[12px]" w={22}>15%</Head>
        <Head cls="w-[92px] !leading-[16px] !text-[12px]" w={21}>18%</Head>
      </div>
      <div className="h-[48px] border-b border-black">
        {DOCS.map(([n, w, l, a, b, c]) => (
          <div key={n} className="flex h-4 items-center leading-4">
            <b className="w-[122px]"><T w={w}>{n}</T></b>
            {[a, b, c].map((v, i) => (
              <span key={i} className={'flex justify-between ' + ['w-[90px] mr-[7px]', 'w-[92px] mr-[5px]', 'w-[93px]'][i]}>
                <span className={l === 'L.' ? 'ml-[4px]' : ''}>{l}</span><T w={nw(v)}>{v}</T>
              </span>
            ))}
          </div>
        ))}
      </div>
      <div className="flex pl-[23px] pt-[7px] leading-4">
        <b className="w-[96px]"><T w={92}>TOTAL VENTA NTA</T></b>
        <Money v="7,783,009.47" cls="w-[84px] mr-[14px]" /><Money v="1,612,384.85" cls="w-[83px] mr-[13px]" /><Money v="103,952,321.05" cls="w-[99px]" />
      </div>
    </div>
  );
}

function Pie() {
  return (
    <svg width="424" height="210" viewBox="766 440 424 210" className="block" fontFamily="Liberation Sans" fontSize="11">
      <path d="M853 528.500v13.500a114.500 76.500 0 0 0 229 0v-13.500z" fill="#0054c4" />
      <ellipse cx="967.500" cy="528.500" rx="114.500" ry="76.500" fill="#006eff" />
      <path d="M968 527V452a114.500 76.500 0 0 1 47.500 7.200z" fill="#008400" />
      <path d="M968 527l47.500-67.800q5 1.500 9 3z" fill="#f00" />
      <path d="M991.500 455v-2.500H1097M1018 460.500h77.500v6H1115M938.500 602v29.500H830" fill="none" stroke="#000" shapeRendering="crispEdges" />
      <text x="1097" y="456" textLength="77">Sum of EXENTO</text>
      <text x="1115" y="470" textLength="59">Sum of 15%</text>
      <text x="771" y="635" textLength="59">Sum of 18%</text>
      <text x="950" y="635" fontSize="11.500" fontWeight="bold" textLength="34">ABRIL</text>
    </svg>
  );
}

const LEG = [['bg-[#008400]', 'Sum of EXENTO', 77, 'L7,783,009', 54, '6.9%', 25], ['bg-[#ff0000]', 'Sum of 15%', 59, 'L1,612,385', 54, '1.4%', 24], ['bg-[#006eff]', 'Sum of 18%', 59, 'L103,952,321', 66, '91.7%', 31]];
const LegRow = ({ r: [c, n, a, v, b, p, d] }) => (
  <div className="flex h-[15px] items-center"><i className={'mr-[7px] size-[10px] ' + c} /><span className="w-[86px]"><T w={a}>{n}</T></span><span className="w-[66px] text-right"><T w={b}>{v}</T></span><span className="w-[44px] text-right"><T w={d}>{p}</T></span></div>
);

function Logo() {
  const dots = [];
  let s = 7;
  const rnd = () => (s = (s * 16807) % 2147483647) / 2147483647;
  for (let i = 0; i < 210; i++) {
    const y = rnd() * 36;
    const half = y < 8 ? 10 : 3 + y * 0.66;
    dots.push(<rect key={i} x={83 + (rnd() + rnd() - 1) * half} y={y + 2} width="1" height="1" fill={i % 2 ? '#333' : '#999'} />);
  }
  return (
    <svg width="178" height="56" className="block">
      <path d="M80 4l3 2 3-2 3 3-3 1-3-1-4 1z" fill="#222" />
      <path d="M78 21l10-3 2 7 9 7 7 7H78l1-10z" fill="#1c1c1c" opacity=".85" />
      {dots}
      <path d="M81 11l4 5M87 12l-2 5" stroke="#fff" strokeWidth="1.500" fill="none" />
      <text x="0" y="36" fontFamily="Liberation Sans" fontWeight="bold" fontSize="29.500" fill="#43342f" stroke="#43342f" strokeWidth=".5" textLength="174" lengthAdjust="spacingAndGlyphs">CAPIBARA</text>
      <rect x="2" y="40" width="172" height="1.500" fill="#f4aaa6" />
      <text x="14" y="51.500" fontFamily="Liberation Sans" fontWeight="bold" fontSize="11" fill="#7b7b7b" textLength="143" lengthAdjust="spacingAndGlyphs">Soluciones Tecnologicas</text>
    </svg>
  );
}

function Page() {
  return (
    <div className="h-[735px] w-[1036px] overflow-hidden border-l border-t border-black bg-white pl-[19px] pt-[19px] font-['Lato',sans-serif] text-black">
      <div className="flex h-[63px]">
        <div className="flex h-[34px] w-[720px] items-center border-b-2 border-[#626262] bg-[#ebebeb] pl-[8px] pt-[13px] font-['DejaVu_Sans',sans-serif] text-[22.500px] font-bold italic leading-none">
          <T w={433}>VENTA NETA POR IMPUESTO, ABRIL</T><T w={62} className="ml-[93px]">2023</T>
        </div>
        <div className="ml-[52px]"><Logo /></div>
      </div>
      <div className="flex h-[18px] items-start pl-[602px] font-['Liberation_Sans',sans-serif] text-[8px] leading-[15px] text-[#222]"><T w={379}>*Se omiten los documentos de devolucion; SAP no lo toma en cuenta en el total de venta neta</T></div>
      <div className="ml-[9px] h-[14px] w-[978px] bg-[#00004f]" />
      <div className="ml-[8px] flex h-[559px]">
        <MainTable />
        <div className="ml-[60px]">
          <DocTable />
          <div className="-ml-[8px] mt-[43px]"><Pie /></div>
          <div className="ml-[77px] mt-[34px] h-[69px] w-[233px] border border-black pl-[7px] pt-[4px] font-['Liberation_Sans',sans-serif] text-[11px]">
            {LEG.map((r) => <LegRow key={r[1]} r={r} />)}
            <div className="h-[2px]" />
            <LegRow r={['', 'Total:', 26, 'L113,347,715', 66, '100.0%', 37]} />
          </div>
        </div>
      </div>
      <div className="ml-[9px] h-[14px] w-[998px] bg-[#00004f]" />
    </div>
  );
}

const Arrow = ({ d }) => <svg viewBox="0 0 16 16" className="size-[15px]"><path d={d} fill="none" stroke="#505050" strokeWidth="2" /></svg>;

const SECT = "h-full border-t border-[#9b9b9b] pl-[8px] text-[12px] leading-[16px] text-black";
function Preview() {
  return (
    <section className="flex w-[1128px] shrink-0 flex-col overflow-hidden bg-[linear-gradient(#9cbbe6,#9dbbe3_5%,#7b9bcb_45%,#6288bd_90%)]">
      <div className="relative flex min-h-0 flex-1">
        <svg className="absolute left-0 top-0" width="1128" height="320">
          <defs>
            <linearGradient id="sky" x2="0" y2="1"><stop offset="0" stopColor="#b3cdec" /><stop offset="1" stopColor="#93b1da" /></linearGradient>
          </defs>
          <path d="M0 0h165Q260 18 77 97Q30 118 0 128z" fill="url(#sky)" />
          <path d="M0 0h430Q200 20 77 97L0 127z" fill="#b4cdec" opacity=".75" />
          <path d="M0 154Q35 128 77 110" fill="none" stroke="#9fbbe2" strokeWidth="2" />
        </svg>
        <div className="relative flex w-[53px] flex-col pt-[42px] pr-[6px]">
          <div className="h-[104px]"><div className={SECT}>EI</div></div>
          <div className="h-[525px]"><div className={SECT}>EP</div></div>
          <div className="h-[55px]"><div className={SECT}>PI</div></div>
          <div className="border-t border-[#9b9b9b]" />
        </div>
        <div className="relative w-[24px] pt-[33px]">
          <i className="ml-[5px] block h-px w-[2px] bg-black" />
          <div className="mt-[8px]"><Ruler vertical /></div>
        </div>
        <div className="relative flex flex-col">
          <div className="flex h-[30px] items-start pt-[6px]">
            <i className="ml-[3px] mr-[8px] mt-[6px] h-[2px] w-[2px] bg-black" />
            <Ruler />
          </div>
          <Page />
        </div>
        <div className="relative mt-[25px] flex w-[15px] flex-1 flex-col items-center bg-[#f0f0f0]">
          <div className="h-[17px] pt-px"><Arrow d="M4 10l4-4 4 4" /></div>
          <div className="h-[627px] w-full bg-[#cdcdcd]" />
          <div className="flex flex-1 items-end pb-[2px]"><Arrow d="M4 6l4 4 4-4" /></div>
        </div>
      </div>
      <div className="ml-[72px] flex h-[15px] bg-[#f0f0f0]">
        <div className="w-[17px] pl-px"><Arrow d="M10 4L6 8l4 4" /></div>
        <div className="w-[977px] bg-[#cdcdcd]" />
        <div className="flex flex-1 justify-end pr-[16px]"><Arrow d="M6 4l4 4-4 4" /></div>
      </div>
    </section>
  );
}

/* indent level, toggle, icon, label, width */
const TREE = [
  [0, '-', 'db', 'Campos de base de datos', 124], [1, '-', 'table', '', 0],
  [2, '', 'fieldok', 'Cadena [100]', 65], [2, '', 'fieldok', 'MES: Cadena [10]', 87], [2, '', 'fieldok', 'ANIO: Número', 70], [2, '', 'fieldok', 'NMES: Número', 71],
  [2, '', 'fieldok', 'EXENTO: Número', 83], [2, '', 'fieldok', '15%: Número', 67], [2, '', 'fieldok', '18%: Número', 67],
  [1, '-', 'table', 'DOCUMENTOS', 70],
  [2, '', 'field', 'TIPO DOCUMENTO: Cadena [17]', 158], [2, '', 'field', 'MES: Cadena [10]', 87], [2, '', 'field', 'ANIO: Número', 70], [2, '', 'field', 'NMES: Número', 71],
  [2, '', 'field', 'EXENTO: Número', 83], [2, '', 'field', '15%: Número', 67], [2, '', 'field', '18%: Número', 67],
  [0, '-', 'fx', 'Campos de fórmula', 92], [1, '', 'field', 'Tvta', 22], [0, '+', 'parambox', 'Campos de parámetro', 106],
  [0, '+', 'sumstar', 'Campos de totales acumulados', 148], [0, '', 'group', 'Campos de nombre de grupo', 138], [0, '+', 'special', 'Campos especiales', 90],
];
const INDENT = ['pl-[7px]', 'pl-[26px]', 'pl-[45px]'];

function Explorer() {
  return (
    <aside className="mt-px flex w-[247px] shrink-0 flex-col bg-white">
      <div className="flex h-[24px] items-center bg-[#b3cce8] pl-[4px] text-[12px] text-[#1f4a9a]">
        <T w={118}>Explorador de campos</T>
        <svg width="28" height="12" className="ml-[94px]"><path d="M3 2.500h5M3.500 2v5M6.500 2v5M7.500 2v5M2 7.500h7M5.500 8v3" stroke="#3b68a8" fill="none" /><path d="M18.500 2.500l7 7M25.500 2.500l-7 7" stroke="#3b68a8" strokeWidth="1.300" /></svg>
      </div>
      <div className="flex h-[22px] items-center bg-gradient-to-b from-[#e2eeff] to-[#a9cdfa] pl-[4px]">
        <Icon n="fieldg" /><span className="w-[7px]" /><Icon n="browse" /><span className="ml-[8px] mr-[7px] h-[20px] w-px bg-[#9a9a9a]" />
        <div className="flex gap-[7px]"><Icon n="newg" /><Icon n="editg" /><Icon n="copyg" /><Icon n="verg" /><Icon n="x" s="size-[15px]" /></div>
      </div>
      <ul className="flex-1 bg-white font-['DejaVu_Sans_Condensed','DejaVu_Sans',sans-serif] text-[11px] leading-4 text-black">
        {TREE.map(([l, t, ic, s, w], i) => (
          <li key={i} className={'flex h-4 items-center ' + INDENT[l]}>
            <span className="flex w-[15px] shrink-0">{t && (
              <svg width="9" height="9"><rect x=".5" y=".5" width="8" height="8" fill="#f6f6f6" stroke="#9a9a9a" /><path d={t === '+' ? 'M2 4.500h5M4.500 2v5' : 'M2 4.500h5'} stroke="#2b4a8a" /></svg>
            )}</span>
            <Icon n={ic} s={ic === 'db' ? 'size-[14px] mx-px' : 'size-[15px]'} />
            {s && <T w={w} className={(s === 'Cadena [100]' ? 'ml-[39px]' : i === 0 ? 'ml-[4px]' : 'ml-[5px]') + ' h-4 leading-[18px]' + (i === 0 ? ' bg-[#efefef]' : '')}>{s}</T>}
          </li>
        ))}
      </ul>
    </aside>
  );
}

export default function App() {
  return (
    <div className={'flex h-[948px] w-[1499px] flex-col overflow-hidden bg-[#bfdbff] ' + UI}>
      <Toolbars />
      <div className="flex min-h-0 flex-1">
        <main className="mr-[5px] flex w-[1247px] shrink-0 flex-col">
          <Tabs />
          <div className="flex min-h-0 flex-1 flex-col border-l border-r border-[#7b8797] border-r-[#d6e4f5]">
            <div className="flex h-[25px] items-end pl-[8px] text-[12px] text-[#1c3f8c]">
              <span className="mb-[3px] w-[45px]"><T w={36}>Diseño</T></span>
              <div className="flex h-[24px] w-[78px] items-center rounded-t-[3px] border border-b-0 border-[#8fb3e4] bg-gradient-to-b from-white to-[#dbe8f8] pb-px pl-[3px]">
                <T w={60}>Vista previa</T>
                <svg width="9" height="9" className="ml-[3px]"><path d="M1 1l7 7M8 1L1 8" stroke="#4d6a9c" strokeWidth="1.300" /></svg>
              </div>
            </div>
            <div className="flex min-h-0 flex-1 border-t border-white bg-[#d5e3f4] pt-[2px] pb-[6px]">
              <div className="mx-[2px] w-[2px] border-x border-[#b2cdee]" />
              <Sidebar />
              <div className="flex w-[8px] shrink-0 justify-center bg-[#d5e3f4]"><i className="w-[4px] border-x border-[#b2cdee]" /></div>
              <Preview />
              <i className="ml-[2px] w-[2px] bg-[#b2cdee]" />
            </div>
          </div>
        </main>
        <Explorer />
      </div>
      <div className="h-[2px] bg-[#5f83b8]" />
    </div>
  );
}
